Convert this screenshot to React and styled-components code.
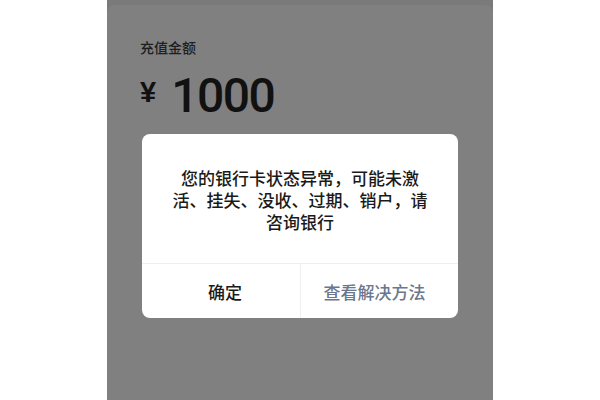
import React from "react";
import styled, { createGlobalStyle } from "styled-components";

const Global = createGlobalStyle`
  html, body { margin: 0; padding: 0; background: #ffffff; }
  body { width: 600px; height: 400px; overflow: hidden; font-family: "Noto Sans CJK SC", "Noto Sans", sans-serif; }
`;

const Page = styled.div`
  width: 600px;
  height: 400px;
  display: flex;
  justify-content: center;
  background: #ffffff;
`;

const Panel = styled.div`
  width: 386px;
  height: 400px;
  background: #7a7a7a;
  display: flex;
  flex-direction: column;
`;

const Card = styled.div`
  flex: 1;
  margin-top: 5px;
  background: #808080;
  border-radius: 8px 8px 0 0;
  padding: 33px 0 0 33px;
  display: flex;
  flex-direction: column;
`;

const Label = styled.div`
  font-size: 14px;
  line-height: 18px;
  font-weight: 500;
  color: #1e1e1e;
  font-family: "Noto Sans CJK SC", sans-serif;
`;

const Amount = styled.div`
  margin-top: 15px;
  height: 50px;
  display: flex;
  align-items: flex-start;
  color: #111;
`;

const Yen = styled.span`
  font-family: "Liberation Sans", Arial, sans-serif;
  font-size: 29px;
  font-weight: 700;
  line-height: 43px;
  margin-right: 15px;
`;

const Digits = styled.span`
  font-family: Roboto, "Liberation Sans", sans-serif;
  font-size: 48px;
  font-weight: 500;
  letter-spacing: -1.5px;
  line-height: 50px;
`;

const Dialog = styled.div`
  margin: 13px 0 0 2px;
  width: 316px;
  height: 184px;
  background: #ffffff;
  border-radius: 8px;
  display: flex;
  flex-direction: column;
  overflow: hidden;
`;

const Message = styled.div`
  padding: 33px 24px 0;
  height: 96px;
  font-size: 17px;
  line-height: 22px;
  font-weight: 500;
  color: #1a1a1a;
  text-align: center;
  font-family: "Noto Sans CJK SC", sans-serif;
`;

const Actions = styled.div`
  flex: 1;
  border-top: 1px solid #efefef;
  display: grid;
  grid-template-columns: 1fr 1fr;
`;

const Action = styled.div`
  display: flex;
  align-items: center;
  justify-content: center;
  font-size: 17px;
  font-weight: 500;
  font-family: "Noto Sans CJK SC", sans-serif;
  color: ${(p) => (p.$link ? "#6a778d" : "#1a1a1a")};
  padding: ${(p) => (p.$link ? "0 10px 0 0" : "0 0 0 8px")};
  & + & { border-left: 1px solid #efefef; }
`;

export default function App() {
  return (
    <Page>
      <Global />
      <Panel>
        <Card>
          <Label>充值金额</Label>
          <Amount>
            <Yen>¥</Yen>
            <Digits>1000</Digits>
          </Amount>
          <Dialog>
            <Message>您的银行卡状态异常，可能未激活、挂失、没收、过期、销户，请咨询银行</Message>
            <Actions>
              <Action>确定</Action>
              <Action $link>查看解决方法</Action>
            </Actions>
          </Dialog>
        </Card>
      </Panel>
    </Page>
  );
}
